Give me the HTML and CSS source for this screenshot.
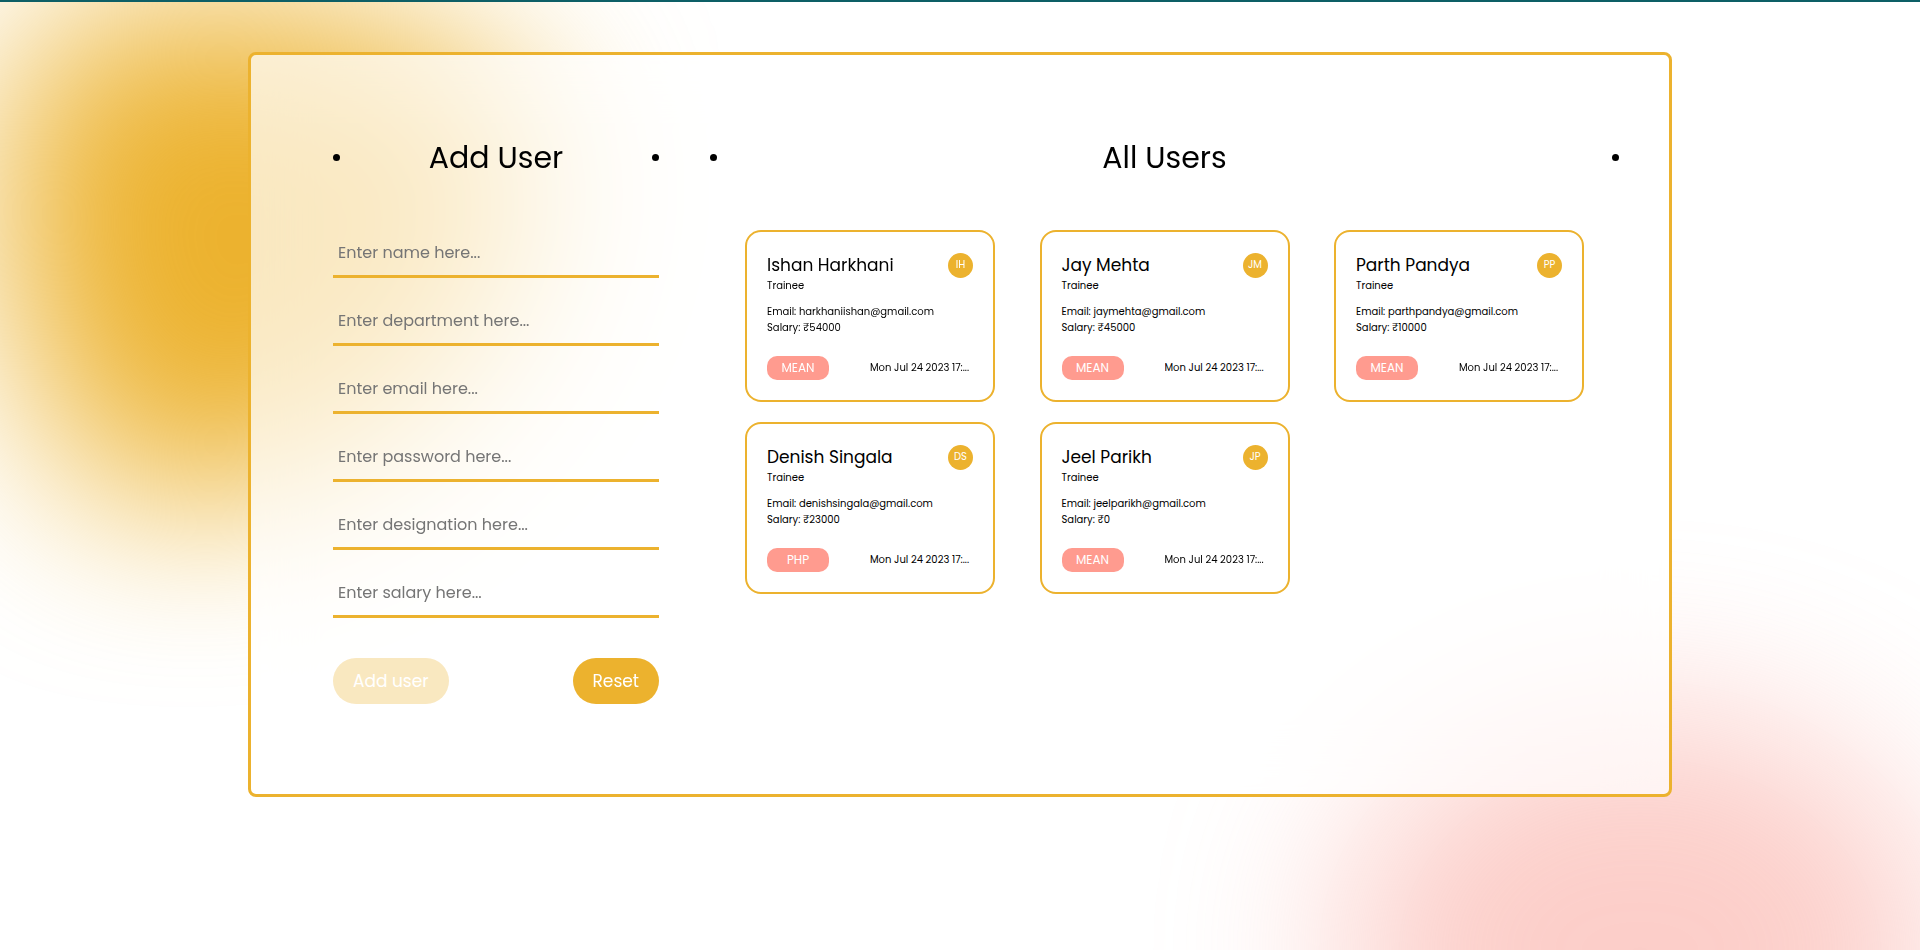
FILE: index.html
```html
<!DOCTYPE html>
<html lang="en">
<head>
<meta charset="utf-8">
<title>Users</title>
<link rel="stylesheet" href="styles.css">
</head>
<body>
<div class="backdrop" aria-hidden="true">
  <div class="blob blob-yellow"></div>
  <div class="blob blob-pink"></div>
</div>
<main class="panel">
  <section class="add-user">
    <h1 class="title">Add User</h1>
    <form class="form">
      <input class="field" type="text" aria-label="Name" placeholder="Enter name here...">
      <input class="field" type="text" aria-label="Department" placeholder="Enter department here...">
      <input class="field" type="email" aria-label="Email" placeholder="Enter email here...">
      <input class="field" type="password" aria-label="Password" placeholder="Enter password here...">
      <input class="field" type="text" aria-label="Designation" placeholder="Enter designation here...">
      <input class="field" type="text" aria-label="Salary" placeholder="Enter salary here...">
      <div class="actions">
        <button class="button" type="submit" disabled>Add user</button>
        <button class="button" type="reset">Reset</button>
      </div>
    </form>
  </section>
  <section class="all-users">
    <h1 class="title">All Users</h1>
    <div class="cards">
      <article class="card">
        <header class="card-head"><h2 class="name">Ishan Harkhani</h2><span class="avatar">IH</span></header>
        <p class="role">Trainee</p>
        <p class="detail">Email: harkhaniishan@gmail.com</p>
        <p class="detail">Salary: ₹54000</p>
        <footer class="card-foot"><span class="badge">MEAN</span><time class="date">Mon Jul 24 2023 17:...</time></footer>
      </article>
      <article class="card">
        <header class="card-head"><h2 class="name">Jay Mehta</h2><span class="avatar">JM</span></header>
        <p class="role">Trainee</p>
        <p class="detail">Email: jaymehta@gmail.com</p>
        <p class="detail">Salary: ₹45000</p>
        <footer class="card-foot"><span class="badge">MEAN</span><time class="date">Mon Jul 24 2023 17:...</time></footer>
      </article>
      <article class="card">
        <header class="card-head"><h2 class="name">Parth Pandya</h2><span class="avatar">PP</span></header>
        <p class="role">Trainee</p>
        <p class="detail">Email: parthpandya@gmail.com</p>
        <p class="detail">Salary: ₹10000</p>
        <footer class="card-foot"><span class="badge">MEAN</span><time class="date">Mon Jul 24 2023 17:...</time></footer>
      </article>
      <article class="card">
        <header class="card-head"><h2 class="name">Denish Singala</h2><span class="avatar">DS</span></header>
        <p class="role">Trainee</p>
        <p class="detail">Email: denishsingala@gmail.com</p>
        <p class="detail">Salary: ₹23000</p>
        <footer class="card-foot"><span class="badge">PHP</span><time class="date">Mon Jul 24 2023 17:...</time></footer>
      </article>
      <article class="card">
        <header class="card-head"><h2 class="name">Jeel Parikh</h2><span class="avatar">JP</span></header>
        <p class="role">Trainee</p>
        <p class="detail">Email: jeelparikh@gmail.com</p>
        <p class="detail">Salary: ₹0</p>
        <footer class="card-foot"><span class="badge">MEAN</span><time class="date">Mon Jul 24 2023 17:...</time></footer>
      </article>
    </div>
  </section>
</main>
</body>
</html>
```
FILE: styles.css
```css
:root {
  --yellow: #ecb22e;
  --pink: #ff9b8f;
}

* {
  box-sizing: border-box;
  margin: 0;
}

body {
  min-height: 100vh;
  padding: 50px 0;
  border-top: 2px solid #0d5f66;
  background: #fff;
  color: #000;
  font-family: Poppins, "Noto Sans", sans-serif;
}

.backdrop {
  position: absolute;
  inset: 2px 0 0;
  z-index: -1;
  overflow: hidden;
}

.blob {
  position: absolute;
  filter: blur(90px);
}

.blob-yellow {
  top: 0;
  left: 0;
  width: 530px;
  height: 500px;
  background: var(--yellow);
  border-radius: 30% 70% 70% 30% / 30% 30% 70% 70%;
}

.blob-pink {
  right: -20px;
  bottom: -240px;
  width: 600px;
  height: 480px;
  background: #f99d93;
  border-radius: 50%;
  opacity: 0.5;
}

.panel {
  display: grid;
  grid-template-columns: 326fr 909fr;
  gap: 51px;
  width: 1424px;
  max-width: 94%;
  margin: 0 auto;
  padding: 80px 50px 90px 82px;
  border: 3px solid var(--yellow);
  border-radius: 8px;
  background: rgba(255, 255, 255, 0.7);
  backdrop-filter: blur(30px);
}

.title {
  display: flex;
  align-items: center;
  justify-content: space-between;
  height: 45px;
  margin-bottom: 50px;
  font-size: 30px;
  font-weight: 400;
  line-height: 42px;
}

.title::before,
.title::after {
  content: "";
  width: 7px;
  height: 7px;
  border-radius: 50%;
  background: #000;
}

.form {
  display: flex;
  flex-direction: column;
  gap: 20px;
}

.field {
  width: 100%;
  height: 48px;
  padding: 0 5px;
  border: 0;
  border-bottom: 3px solid var(--yellow);
  background: transparent;
  font: inherit;
  font-size: 16px;
  outline: none;
}

.field::placeholder {
  color: #757575;
}

.actions {
  display: flex;
  justify-content: space-between;
  margin-top: 20px;
}

.button {
  height: 46px;
  padding: 0 20px;
  border: 0;
  border-radius: 24px;
  background: var(--yellow);
  color: #fff;
  font: inherit;
  font-size: 17px;
}

.button:disabled {
  opacity: 0.3;
}

.cards {
  display: grid;
  grid-template-columns: repeat(3, 250px);
  justify-content: space-between;
  row-gap: 20px;
  padding: 0 35px;
}

.card {
  padding: 20px;
  border: 2px solid var(--yellow);
  border-radius: 16px;
  background: #fff;
}

.card-head,
.card-foot {
  display: flex;
  align-items: center;
  justify-content: space-between;
}

.name {
  font-size: 17px;
  font-weight: 400;
  line-height: 26px;
}

.avatar {
  width: 25px;
  height: 25px;
  border-radius: 50%;
  background: var(--yellow);
  color: #fff;
  font-size: 10px;
  line-height: 24px;
  text-align: center;
}

.role {
  margin-bottom: 10px;
  font-size: 10px;
  line-height: 16px;
}

.detail {
  font-size: 10px;
  line-height: 16px;
}

.card-foot {
  margin-top: 20px;
}

.badge {
  width: 62px;
  border-radius: 10px;
  background: var(--pink);
  color: #fff;
  font-size: 12px;
  line-height: 24px;
  text-align: center;
}

.date {
  width: 103px;
  overflow: hidden;
  font-size: 10px;
  white-space: nowrap;
}
```
